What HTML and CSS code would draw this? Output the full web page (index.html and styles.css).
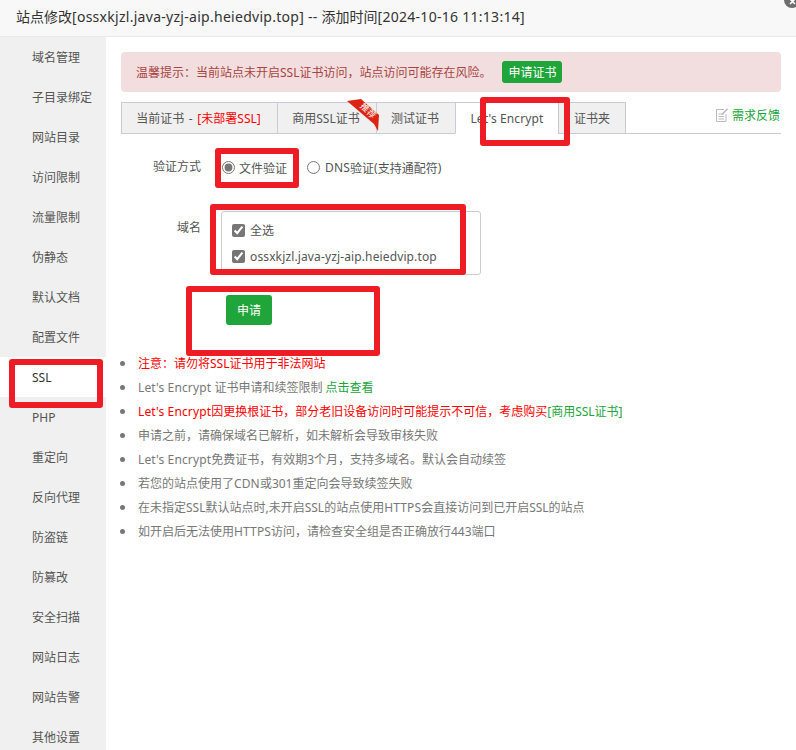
FILE: index.html
```html
<!DOCTYPE html>
<html lang="zh">
<head>
<meta charset="utf-8">
<title>站点修改</title>
<link rel="stylesheet" href="styles.css">
</head>
<body>
<div class="dialog">
  <header class="title">站点修改<span class="lat-t">[ossxkjzl.java-yzj-aip.heiedvip.top] -- </span>添加时间<span class="lat-t">[2024-10-16 11:13:14]</span></header>
  <span class="close"><svg width="12" height="9" viewBox="0 0 12 9"><path d="M5 4 L10 -1 M10 4 L5 -1" stroke="#fff" stroke-width="1.5"/></svg></span>
  <div class="body">
    <nav class="side">
      <a>域名管理</a><a>子目录绑定</a><a>网站目录</a><a>访问限制</a><a>流量限制</a><a>伪静态</a><a>默认文档</a><a>配置文件</a><a class="on">SSL</a><a>PHP</a><a>重定向</a><a>反向代理</a><a>防盗链</a><a>防篡改</a><a>安全扫描</a><a>网站日志</a><a>网站告警</a><a>其他设置</a>
    </nav>
    <main class="main">
      <div class="alert"><span>温馨提示：当前站点未开启SSL证书访问，站点访问可能存在风险。</span><button class="btn btn-sm">申请证书</button></div>
      <div class="tabs">
        <span class="tab t1">当前证书 - <em>[未部署SSL]</em></span>
        <span class="tab t2">商用SSL证书
          <svg class="ribbon" width="34" height="38" viewBox="0 0 34 38"><path d="M0 3 L14 1 L32 17 L31 33 L27 26 Z" fill="#dd2411"/><text class="ribbon-text" x="0" y="0" transform="translate(18.900 14.800) rotate(45)" text-anchor="middle">推荐</text></svg>
        </span>
        <span class="tab t3">测试证书</span>
        <span class="tab t4 active"><span class="lat">Let's Encrypt</span></span>
        <span class="tab t5">证书夹</span>
        <a class="feedback"><svg width="13" height="15" viewBox="0 0 13 15"><path d="M10 6V13.500H.5V1.500H8M2.500 6H8M2.500 8.500H8M2.500 11H8" fill="none" stroke="#bbb"/><path d="M6 6.500 L11.500 .8" stroke="#bbb" stroke-width="1.500"/></svg>需求反馈</a>
      </div>
      <div class="row row-method">
        <span class="label">验证方式</span>
        <label class="opt first"><input type="radio" name="m" checked>文件验证</label>
        <label class="opt second"><input type="radio" name="m"><span class="lat">DNS</span>验证<span class="lat">(</span>支持通配符<span class="lat">)</span></label>
      </div>
      <div class="row row-domain">
        <span class="label">域名</span>
        <div class="domains">
          <label class="chk"><input type="checkbox" checked>全选</label>
          <label class="chk"><input type="checkbox" checked><span class="lat">ossxkjzl.java-yzj-aip.heiedvip.top</span></label>
        </div>
      </div>
      <button class="btn btn-apply">申请</button>
      <ul class="tips">
        <li class="red">注意：请勿将SSL证书用于非法网站</li>
        <li><span class="lat">Let's Encrypt </span>证书申请和续签限制 <a>点击查看</a></li>
        <li class="red"><span class="lat">Let's Encrypt</span>因更换根证书，部分老旧设备访问时可能提示不可信，考虑购买<a>[商用SSL证书]</a></li>
        <li>申请之前，请确保域名已解析，如未解析会导致审核失败</li>
        <li><span class="lat">Let's Encrypt</span>免费证书，有效期3个月，支持多域名。默认会自动续签</li>
        <li>若您的站点使用了<span class="lat">CDN</span>或301重定向会导致续签失败</li>
        <li>在未指定SSL默认站点时,未开启SSL的站点使用<span class="lat">HTTPS</span>会直接访问到已开启SSL的站点</li>
        <li>如开启后无法使用<span class="lat">HTTPS</span>访问，请检查安全组是否正确放行443端口</li>
      </ul>
    </main>
  </div>
  <i class="mark m-tab"></i>
  <i class="mark m-radio"></i>
  <i class="mark m-domain"></i>
  <i class="mark m-btn"></i>
  <i class="mark m-ssl"></i>
</div>
</body>
</html>
```

FILE: styles.css
```css
* { box-sizing: border-box; }
html, body { margin: 0; height: 100%; }
body {
  font-family: "Noto Sans", "Noto Sans CJK SC", sans-serif;
  font-size: 12px;
  color: #555;
  background: #fff;
  overflow: hidden;
}
.lat { letter-spacing: .13px; }
.lat-t { letter-spacing: .28px; }
.dialog { position: relative; width: 796px; height: 750px; overflow: hidden; }
.title {
  height: 37px;
  padding-left: 16px;
  line-height: 33px;
  font-size: 14px;
  color: #333;
  background: #f8f8f8;
  border-bottom: 1px solid #e9e9e9;
}
.close {
  position: absolute; right: -4px; top: -8px;
  width: 16px; height: 16px; border-radius: 50%;
  background: #6e6e6e;
}
.close svg { position: absolute; left: 1px; top: 8px; }
.body { display: flex; height: 713px; }
.side { width: 106px; flex: none; background: #f0f0f0; }
.side a { display: block; height: 40px; line-height: 42px; padding-left: 32px; color: #555; }
.side a.on { background: #fff; color: #333; }
.main { flex: 1; padding: 15px 15px 0; min-width: 0; }
.alert {
  height: 40px; display: flex; align-items: center;
  padding-left: 15px;
  background: #f2dede; color: #a94442;
  border-radius: 4px;
}
.btn {
  border: 0; color: #fff; background: #20a53a;
  font: inherit; border-radius: 3px; padding: 0;
}
.btn-sm { width: 60px; height: 22px; margin-left: 11px; }
.tabs {
  position: relative;
  display: flex; height: 32px; margin-top: 10px;
  border-bottom: 1px solid #ccc9d9;
}
.tab {
  position: relative;
  height: 32px; line-height: 31px; text-align: center;
  background: #f0f0f0;
  border: 1px solid #ccc9d9;
  border-right-width: 0;
  flex: none;
}
.tab em { font-style: normal; color: #f00; }
.t1 { width: 156px; word-spacing: 1.5px; padding-right: 2px; }
.t2 { width: 99px; padding-right: 2px; z-index: 1; }
.t3 { width: 79px; padding-right: 2px; }
.t4 { width: 103px; }
.t5 { width: 68px; border-right-width: 1px; }
.tab.active { background: #fff; border-bottom-color: #fff; }
.ribbon { position: absolute; left: 69px; top: -5px; }
.ribbon-text { font-size: 9px; fill: #fff; }
.feedback {
  margin-left: auto; margin-right: 1px; height: 30px; display: flex; align-items: center; gap: 3px;
  color: #20a53a; padding-bottom: 4px;
}
.row { display: flex; }
.label { width: 80px; text-align: right; flex: none; }
.row-method { margin-top: 23px; height: 20px; align-items: center; }
.row-method .label { padding-bottom: 3px; }
.opt { display: flex; align-items: center; padding-top: 1px; }
.opt input { margin: 0 4px 0 0; width: 13px; height: 13px; accent-color: #767676; }
.opt.first { margin-left: 21px; margin-right: 20px; }
.opt.second input { margin-right: 5px; }
.row-domain { margin-top: 34px; }
.row-domain .label { padding-top: 7px; }
.domains {
  margin-left: 20px; width: 260px; height: 64px;
  border: 1px solid #ccc; border-radius: 3px;
  padding: 5px 0 0 10px;
}
.chk { display: flex; align-items: center; height: 26px; }
.chk input { margin: 0 5px 0 0; width: 13px; height: 13px; accent-color: #767676; }
.btn-apply { display: block; width: 46px; height: 30px; margin: 20px 0 0 105px; }
.tips { list-style: none; margin: 26px 0 0; padding: 0; }
.tips li { position: relative; height: 24px; line-height: 26px; padding-left: 17px; color: #777; white-space: nowrap; }
.tips li::before {
  content: ""; position: absolute; left: -1px; top: 10px;
  width: 5px; height: 5px; border-radius: 50%; background: #777;
}
.tips li.red { color: #f00; }
.tips a { color: #20a53a; }
.mark {
  position: absolute;
  border: 6px solid #ee1c25;
  border-radius: 3px;
}
.m-tab { left: 480px; top: 97px; width: 90px; height: 49px; }
.m-radio { left: 215px; top: 148px; width: 84px; height: 40px; }
.m-domain { left: 210px; top: 204px; width: 256px; height: 71px; }
.m-btn { left: 186px; top: 286px; width: 194px; height: 70px; }
.m-ssl { left: 9px; top: 359px; width: 94px; height: 49px; }
```
